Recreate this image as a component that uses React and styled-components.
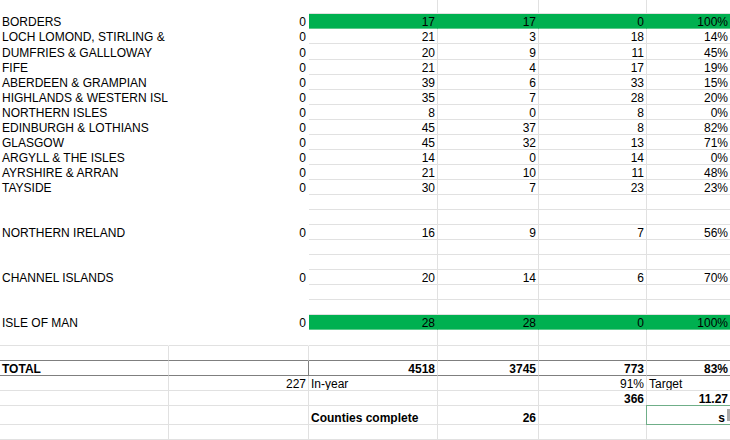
import React from "react";
import styled, { createGlobalStyle } from "styled-components";

const GlobalStyle = createGlobalStyle`
  html, body { margin: 0; padding: 0; background: #fff; }
  body { font-family: "Liberation Sans", Arial, sans-serif; font-size: 12px; color: #000; }
`;

const GRID = "#e1e1e1";
const DARK = "#7f7f7f";
const GREEN = "#00b050";
const GREEN_EDGE = "#5cc98b";
const SEL = "#6fae88";

const Sheet = styled.div`
  width: 730px;
  height: 440px;
  overflow: hidden;
  display: flex;
  flex-direction: column;
  background: #fff;
`;

const Row = styled.div`
  display: grid;
  grid-template-columns: 169px 140px 129px 101px 108px 1fr;
  height: ${(p) => p.$h || 15}px;
  flex: none;
`;

const Cell = styled.div`
  position: relative;
  box-sizing: border-box;
  display: flex;
  align-items: flex-end;
  justify-content: ${(p) => (p.$right ? "flex-end" : "flex-start")};
  padding: 0 ${(p) => p.$pr ?? 2}px 0 2px;
  overflow: hidden;
  white-space: nowrap;
  line-height: 12px;
  font-weight: ${(p) => (p.$bold ? 700 : 400)};
  background: ${(p) => (p.$green ? GREEN : "#fff")};
  border-right: ${(p) => (p.$noRight ? "none" : `1px solid ${p.$rc || GRID}`)};
  border-bottom: 1px solid ${(p) => p.$bc || GRID};
  box-shadow: ${(p) =>
    p.$selected
      ? `-1px 0 0 0 ${SEL}, 0 -1px 0 0 ${SEL}, -1px -1px 0 0 ${SEL}`
      : "none"};
`;

const Cursor = styled.span`
  position: absolute;
  right: 0;
  bottom: 3px;
  width: 3px;
  height: 12px;
  background: #a9a9a9;
`;

const regions = [
  ["BORDERS", 17, 17, 0, "100%", true],
  ["LOCH LOMOND, STIRLING &", 21, 3, 18, "14%"],
  ["DUMFRIES & GALLLOWAY", 20, 9, 11, "45%", false, 16],
  ["FIFE", 21, 4, 17, "19%"],
  ["ABERDEEN & GRAMPIAN", 39, 6, 33, "15%"],
  ["HIGHLANDS & WESTERN ISL", 35, 7, 28, "20%"],
  ["NORTHERN ISLES", 8, 0, 8, "0%"],
  ["EDINBURGH & LOTHIANS", 45, 37, 8, "82%"],
  ["GLASGOW", 45, 32, 13, "71%"],
  ["ARGYLL & THE ISLES", 14, 0, 14, "0%"],
  ["AYRSHIRE & ARRAN", 21, 10, 11, "48%"],
  ["TAYSIDE", 30, 7, 23, "23%"],
  null,
  null,
  ["NORTHERN IRELAND", 16, 9, 7, "56%"],
  null,
  null,
  ["CHANNEL ISLANDS", 20, 14, 6, "70%"],
  null,
  null,
  ["ISLE OF MAN", 28, 28, 0, "100%", true],
];

const Plain = (props) => <Cell $rc="#fff" $bc="#fff" {...props} />;

function RegionRow({ r }) {
  if (!r) {
    return (
      <Row>
        <Plain />
        <Plain />
        <Cell />
        <Cell />
        <Cell />
        <Cell $noRight />
      </Row>
    );
  }
  const [name, c, d, e, f, green, h] = r;
  const g = green ? { $green: true, $rc: GREEN, $bc: GREEN_EDGE } : {};
  return (
    <Row $h={h}>
      <Plain $pr={0}>{name}</Plain>
      <Plain $right>0</Plain>
      <Cell $right {...g}>{c}</Cell>
      <Cell $right {...g}>{d}</Cell>
      <Cell $right {...g}>{e}</Cell>
      <Cell $right $noRight {...g}>{f}</Cell>
    </Row>
  );
}

export default function App() {
  return (
    <>
      <GlobalStyle />
      <Sheet>
        <Row $h={14}>
          <Plain />
          <Plain />
          <Cell />
          <Cell />
          <Cell />
          <Cell $noRight />
        </Row>
        {regions.map((r, i) => (
          <RegionRow key={i} r={r} />
        ))}
        <Row $h={16}>
          <Cell $rc="#fff" />
          <Cell $rc="#fff" />
          <Cell />
          <Cell />
          <Cell />
          <Cell $noRight />
        </Row>
        <Row>
          <Cell $bc={DARK} />
          <Cell $bc={DARK} />
          <Cell $bc={DARK} />
          <Cell $bc={DARK} />
          <Cell $bc={DARK} />
          <Cell $bc={DARK} $noRight />
        </Row>
        <Row>
          <Cell $bc={DARK} $bold>TOTAL</Cell>
          <Cell $bc={DARK} $rc={DARK} />
          <Cell $bc={DARK} $right $bold>4518</Cell>
          <Cell $bc={DARK} $right $bold>3745</Cell>
          <Cell $bc={DARK} $right $bold>773</Cell>
          <Cell $bc={DARK} $right $bold $noRight>83%</Cell>
        </Row>
        <Row>
          <Cell />
          <Cell $right>227</Cell>
          <Cell>In-year</Cell>
          <Cell />
          <Cell $right>91%</Cell>
          <Cell $noRight>Target</Cell>
        </Row>
        <Row>
          <Cell />
          <Cell />
          <Cell />
          <Cell />
          <Cell $right $bold>366</Cell>
          <Cell $right $bold $noRight>11.27</Cell>
        </Row>
        <Row $h={19}>
          <Cell />
          <Cell />
          <Cell $bold>Counties complete</Cell>
          <Cell $right $bold>26</Cell>
          <Cell />
          <Cell $right $bold $noRight $selected $bc={SEL} $pr={5}>
            s
            <Cursor />
          </Cell>
        </Row>
        <Row>
          <Cell />
          <Cell />
          <Cell />
          <Cell />
          <Cell />
          <Cell $noRight />
        </Row>
      </Sheet>
    </>
  );
}
